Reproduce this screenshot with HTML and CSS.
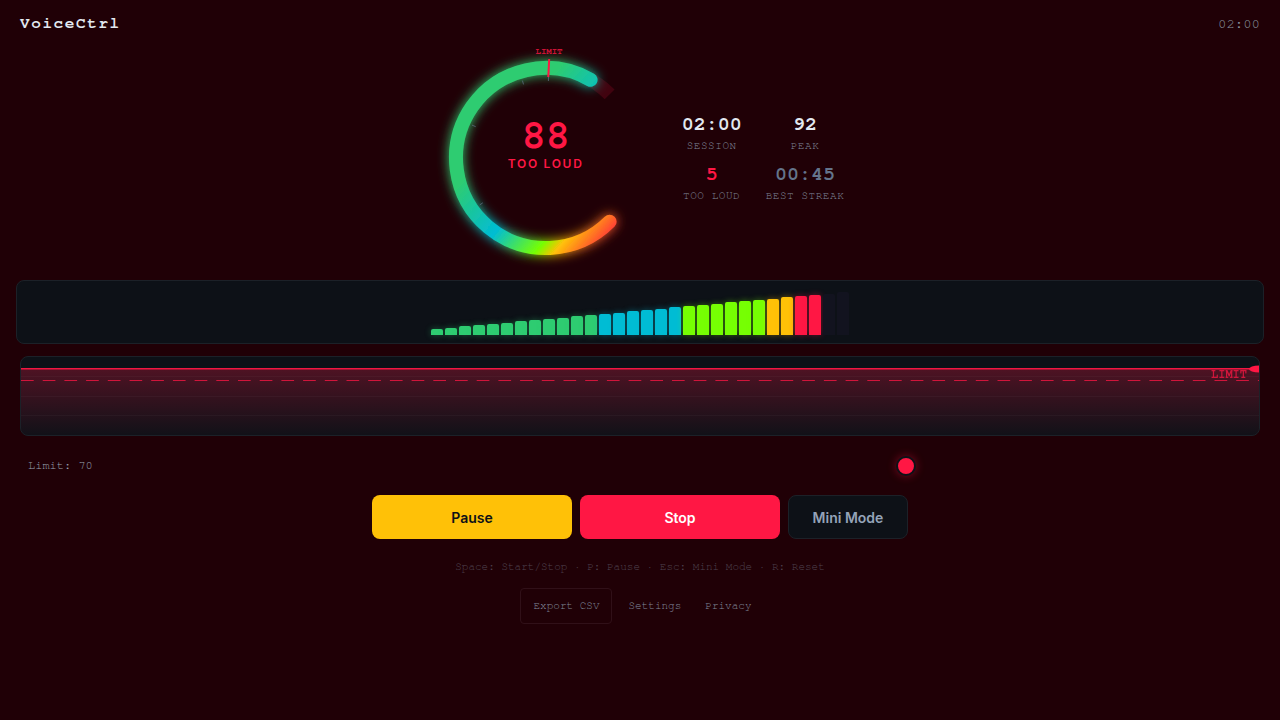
FILE: index.html
```html
<!DOCTYPE html>
<html lang="en">
<head>
<meta charset="utf-8">
<title>VoiceCtrl</title>
<link rel="stylesheet" href="styles.css">
</head>
<body>
<header class="topbar">
  <h1 class="brand">VoiceCtrl</h1>
  <time class="clock">02:00</time>
</header>
<main class="main">
  <section class="overview">
    <div class="gauge">
      <svg class="gauge-art" viewBox="0 0 220 220" aria-hidden="true">
        <defs>
          <linearGradient id="level" x1="0" y1="0" x2="1" y2="1">
            <stop offset="0" stop-color="#2ecc71"/>
            <stop offset=".333" stop-color="#2ecc71"/>
            <stop offset=".583" stop-color="#00bcd4"/>
            <stop offset=".77" stop-color="#76ff03"/>
            <stop offset=".833" stop-color="#ffc107"/>
            <stop offset="1" stop-color="#ff1744"/>
          </linearGradient>
          <filter id="glow" x="-20%" y="-20%" width="140%" height="140%">
            <feGaussianBlur stdDeviation="6" result="b"/>
            <feMerge><feMergeNode in="b"/><feMergeNode in="SourceGraphic"/></feMerge>
          </filter>
        </defs>
        <path d="M173.64 173.64A90 90 0 1 1 173.64 46.36" fill="none" stroke="#ff1744" stroke-opacity=".15" stroke-width="14"/>
        <path d="M173.64 173.64A90 90 0 1 1 154.6 31.8" fill="none" stroke="url(#level)" stroke-width="14" stroke-linecap="round" filter="url(#glow)"/>
        <g stroke="#64748b" stroke-opacity=".7" stroke-width="1">
          <path d="M46.8 154.8L43.8 156.9M39.7 78.7L36 77.1M87.5 36.4L86.4 32.6M112.4 33L112.5 29"/>
        </g>
        <path d="M112.3 29L113.2 11" stroke="#ff1744" stroke-width="2"/>
        <text class="gauge-limit" x="113" y="6" text-anchor="middle">LIMIT</text>
      </svg>
      <div class="reading">
        <strong class="reading-value">88</strong>
        <span class="reading-state">TOO LOUD</span>
      </div>
    </div>
    <dl class="stats">
      <div class="stat"><dt>SESSION</dt><dd>02:00</dd></div>
      <div class="stat"><dt>PEAK</dt><dd>92</dd></div>
      <div class="stat"><dt>TOO LOUD</dt><dd class="is-loud">5</dd></div>
      <div class="stat"><dt>BEST STREAK</dt><dd class="is-muted">00:45</dd></div>
    </dl>
  </section>
  <section class="meter" id="meter" aria-label="Level meter"></section>
  <section class="history" aria-label="Level history">
    <svg class="history-art" aria-hidden="true">
      <defs>
        <linearGradient id="fade" x1="0" y1="0" x2="0" y2="1">
          <stop offset="0" stop-color="#ff1744" stop-opacity=".27"/>
          <stop offset="1" stop-color="#ff1744" stop-opacity=".02"/>
        </linearGradient>
      </defs>
      <rect y="12" width="100%" height="66" fill="url(#fade)"/>
      <g stroke="#fff" stroke-opacity=".03">
        <line x2="100%" y1="19.5" y2="19.5"/><line x2="100%" y1="39.5" y2="39.5"/><line x2="100%" y1="58.5" y2="58.5"/>
      </g>
      <line x2="100%" y1="23.5" y2="23.5" stroke="#ff1744" stroke-opacity=".75" stroke-dasharray="12.7 9"/>
      <line x2="100%" y1="11.8" y2="11.8" stroke="#ff1744" stroke-opacity=".95" stroke-width="1.5"/>
      <ellipse cx="100%" cy="12" rx="10" ry="3.5" fill="#ff1744"/>
    </svg>
    <span class="history-limit">LIMIT</span>
  </section>
  <div class="limit">
    <label class="limit-label" for="limit">Limit: 70</label>
    <input class="limit-range" id="limit" type="range" min="0" max="100" value="70">
  </div>
  <div class="actions">
    <button class="btn btn-pause" type="button">Pause</button>
    <button class="btn btn-stop" type="button">Stop</button>
    <button class="btn btn-mini" type="button">Mini Mode</button>
  </div>
  <p class="hints">Space: Start/Stop · P: Pause · Esc: Mini Mode · R: Reset</p>
</main>
<footer class="footer">
  <button class="export" type="button">Export CSV</button>
  <a class="link" href="#settings">Settings</a>
  <a class="link" href="#privacy">Privacy</a>
</footer>
<script src="meter.js"></script>
</body>
</html>
```
FILE: styles.css
```css
:root {
  --bg: #200006;
  --panel: #0d1117;
  --line: #1c2128;
  --red: #ff1744;
  --amber: #ffc107;
  --dim: #808a9c;
  --mono: "FreeMono", "Nimbus Mono PS", "Courier New", "Liberation Mono", monospace;
  --sans: Inter, sans-serif;
}
* { box-sizing: border-box; margin: 0; }
body { background: var(--bg); color: #e2e8f0; font-family: var(--sans); min-height: 100vh; }
.topbar { display: flex; justify-content: space-between; align-items: center; height: 48px; padding: 0 20px; }
.brand { padding-bottom: 2px; font: 700 16px/24px var(--mono); letter-spacing: 0.1em; }
.clock { font: 14px/24px var(--mono); color: #8b949e; }
.overview { display: flex; justify-content: center; align-items: center; gap: 26px; }
.gauge { position: relative; width: 220px; height: 220px; }
.gauge-art { display: block; width: 100%; height: 100%; overflow: visible; }
.gauge-limit { font: 700 9px var(--mono); fill: var(--red); fill-opacity: 0.8; }
.reading { position: absolute; inset: 0; display: flex; flex-direction: column; align-items: center; padding-top: 68px; color: var(--red); }
.reading-value { font: 700 40px/40px var(--mono); }
.reading-state { font-size: 12px; line-height: 16px; font-weight: 600; letter-spacing: 0.14em; }
.stats { display: grid; grid-template-columns: auto auto; gap: 11px 24px; }
.stat { display: flex; flex-direction: column-reverse; align-items: center; gap: 5px; }
.stat dd { font: 700 20px/20px var(--mono); }
.stat dt { font: 11px/14px var(--mono); letter-spacing: 0.05em; color: var(--dim); }
.stat .is-loud { color: var(--red); }
.stat .is-muted { color: #64748b; }
.meter { display: flex; justify-content: center; align-items: flex-end; gap: 2px; height: 64px; margin: 12px 16px; padding: 8px; background: var(--panel); border: 1px solid var(--line); border-radius: 8px; }
.bar { width: 12px; border-radius: 2px 2px 0 0; background: currentColor; box-shadow: 0 0 6px color-mix(in srgb, currentColor 40%, transparent); }
.bar.safe { color: #2ecc71; }
.bar.normal { color: #00bcd4; }
.bar.raised { color: #76ff03; }
.bar.high { color: var(--amber); }
.bar.loud { color: var(--red); }
.bar.off { color: #12131f; box-shadow: none; }
.history { position: relative; height: 80px; margin: 0 20px; background: var(--panel); border: 1px solid var(--line); border-radius: 8px; overflow: hidden; }
.history-art { display: block; width: 100%; height: 100%; }
.history-limit { position: absolute; top: 11px; right: 12px; font: 700 12px/12px var(--mono); color: var(--red); opacity: 0.75; }
.limit { display: flex; align-items: center; gap: 12px; padding: 20px 28px 19px; }
.limit-label { min-width: 72px; padding-bottom: 2px; font: 12px/18px var(--mono); color: #9aa4b2; }
.limit-range { appearance: none; flex: 1; min-width: 0; height: 20px; margin: 0; background: transparent; }
.limit-range::-webkit-slider-thumb { appearance: none; width: 20px; height: 20px; border: 2px solid var(--panel); border-radius: 50%; background: var(--red); box-shadow: 0 0 10px rgba(255, 23, 68, 0.4); }
.actions { display: flex; justify-content: center; gap: 8px; padding: 0 20px; }
.btn { height: 44px; width: 200px; padding: 2px 0 0; border: 0; border-radius: 8px; font: 600 14px/20px var(--sans); }
.btn-pause { background: var(--amber); color: #0d1117; }
.btn-stop { background: var(--red); color: #fff; }
.btn-mini { width: 120px; background: var(--panel); border: 1px solid var(--line); color: #94a3b8; }
.hints { margin: 20px 0 13px; font: 11px/16px var(--mono); text-align: center; color: #4f4350; }
.footer { display: flex; justify-content: center; align-items: center; gap: 8px; }
.export { height: 36px; padding: 0 12px; background: transparent; border: 1px solid #301018; border-radius: 4px; font: 11px/16px var(--mono); color: var(--dim); }
.link { padding: 0 8px; font: 11px/16px var(--mono); color: var(--dim); text-decoration: none; }
```
FILE: meter.js
```js
const heights = [6, 7, 9, 10, 11, 12, 14, 15, 16, 17, 19, 20, 21, 22, 24, 25, 26, 28, 29, 30, 31, 33, 34, 35, 36, 38, 39, 40, 41, 43];
const zones = [[12, "safe"], [18, "normal"], [24, "raised"], [26, "high"], [28, "loud"], [30, "off"]];
const meter = document.getElementById("meter");
heights.forEach((height, i) => {
  const bar = document.createElement("span");
  bar.className = "bar " + zones.find(([end]) => i < end)[1];
  bar.style.height = height + "px";
  meter.append(bar);
});
```
